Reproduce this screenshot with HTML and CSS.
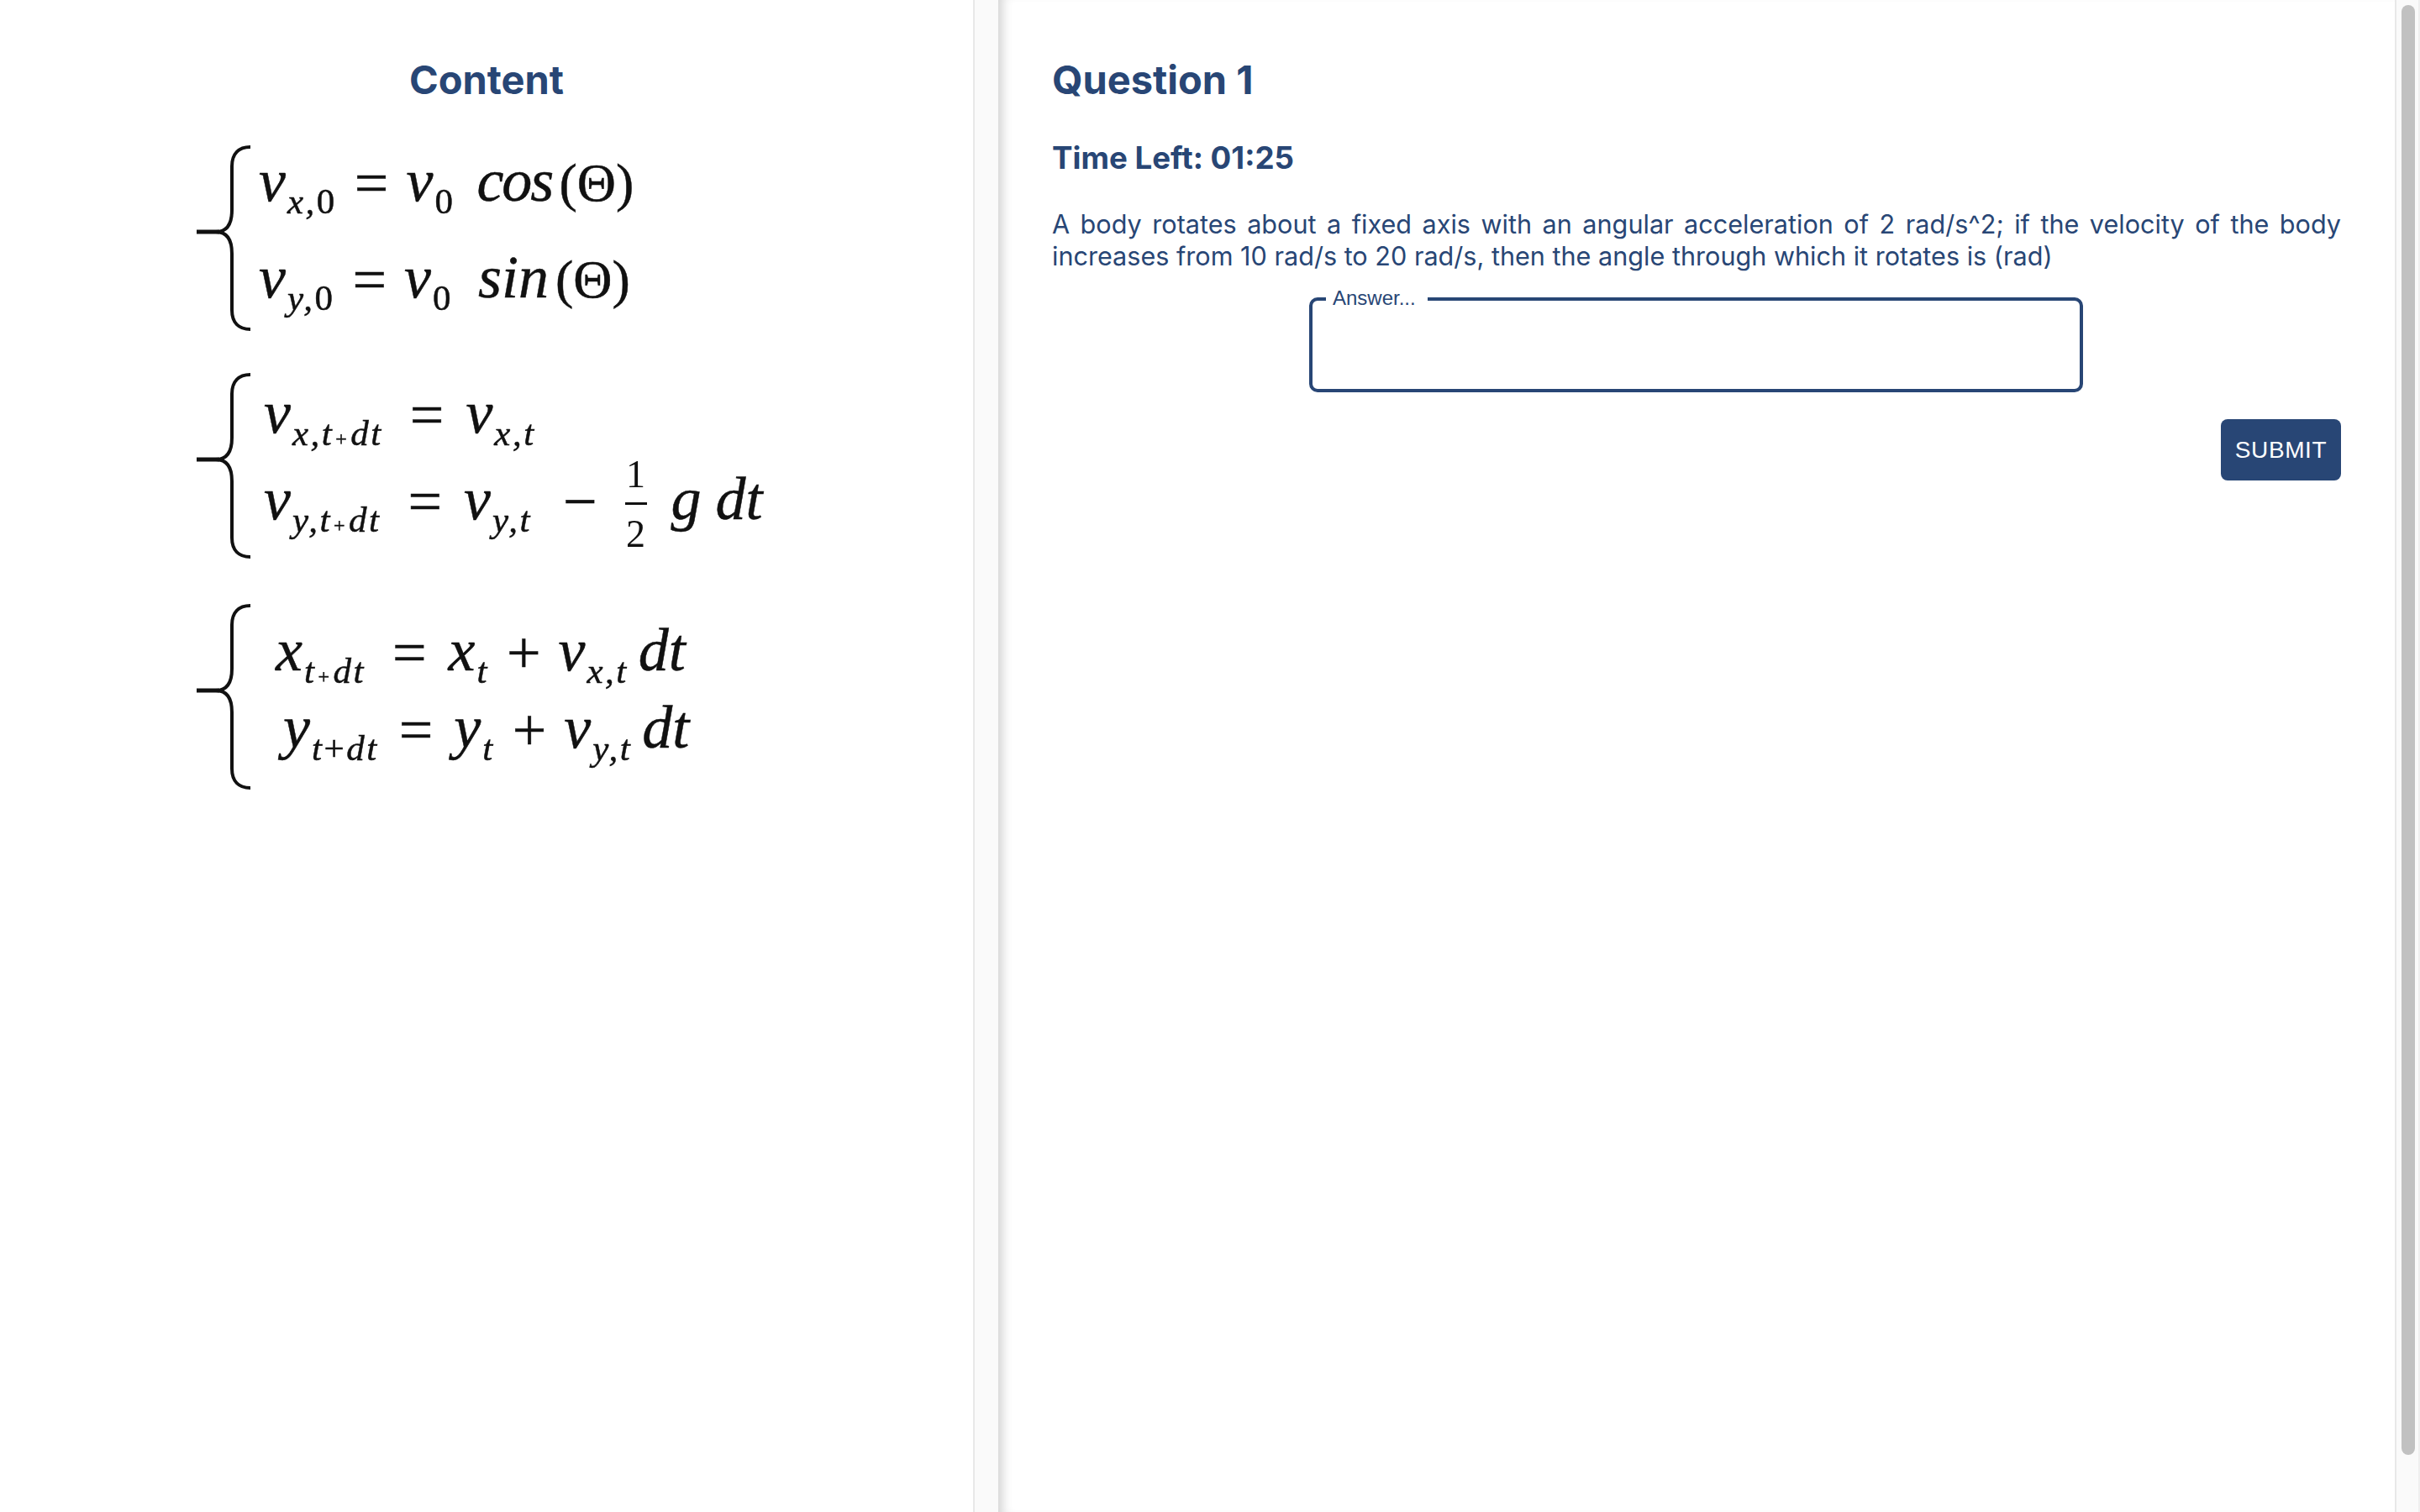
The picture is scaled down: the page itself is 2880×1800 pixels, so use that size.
FILE: index.html
```html
<!DOCTYPE html>
<html lang="en">

<head>
  <meta charset="UTF-8"/>
  <title>Question 1</title>

  <link rel="stylesheet" href="styles.css">
</head>

<body>
<div class="layout">
  <div class="content-pane">
    <h1 class="content-title">Content</h1>

    <div class="system system-first">
      <svg class="brace" viewBox="0 0 67 224"><path d="M65 3C51 3 43 11 43 26V78C43 94 38 104 24 104C38 104 43 114 43 130V197C43 212 51 220 65 220"/><path class="brace-tip" d="M1 104H28"/></svg>
      <div class="lines lines-first">
        <div class="eq"><i>v</i><sub><i>x,</i>0</sub><span class="op">=</span><i>v</i><sub>0</sub><i class="fn fn-cos">cos</i><span class="paren">(&Theta;)</span></div>
        <div class="eq"><i>v</i><sub><i>y,</i>0</sub><span class="op">=</span><i>v</i><sub>0</sub><i class="fn">sin</i><span class="paren">(&Theta;)</span></div>
      </div>
    </div>

    <div class="system">
      <svg class="brace" viewBox="0 0 67 224"><path d="M65 3C51 3 43 11 43 26V78C43 94 38 104 24 104C38 104 43 114 43 130V197C43 212 51 220 65 220"/><path class="brace-tip" d="M1 104H28"/></svg>
      <div class="lines lines-second">
        <div class="eq"><i>v</i><sub><i>x,t</i><small>+</small><i>dt</i></sub><span class="op op-wide">=</span><i>v</i><sub><i>x,t</i></sub></div>
        <div class="eq eq-frac"><i>v</i><sub><i>y,t</i><small>+</small><i>dt</i></sub><span class="op op-wide">=</span><i>v</i><sub><i>y,t</i></sub><span class="op minus">&minus;</span><span class="frac"><span>1</span><span class="frac-bottom">2</span></span><i class="term-g">g</i><i class="term-dt">dt</i></div>
      </div>
    </div>

    <div class="system system-last">
      <svg class="brace" viewBox="0 0 67 224"><path d="M65 3C51 3 43 11 43 26V78C43 94 38 104 24 104C38 104 43 114 43 130V197C43 212 51 220 65 220"/><path class="brace-tip" d="M1 104H28"/></svg>
      <div class="lines lines-third">
        <div class="eq"><i>x</i><sub><i>t</i><small>+</small><i>dt</i></sub><span class="op op-wide">=</span><i>x</i><sub><i>t</i></sub><span class="op plus">+</span><i>v</i><sub><i>x,t</i></sub><i class="dt-end">dt</i></div>
        <div class="eq eq-shift"><i>y</i><sub><i>t</i>+<i>dt</i></sub><span class="op op-tight">=</span><i>y</i><sub><i>t</i></sub><span class="op plus">+</span><i>v</i><sub><i>y,t</i></sub><i class="dt-end">dt</i></div>
      </div>
    </div>
  </div>
  <div class="scroll-track scroll-track-left"></div>

  <div class="question-pane">
    <h1 class="question-title">Question 1</h1>
    <h2 class="time-left">Time Left: 01:25</h2>
    <p class="question-text">A body rotates about a fixed axis with an angular acceleration of 2 rad/s^2; if the velocity of the body increases from 10 rad/s to 20 rad/s, then the angle through which it rotates is (rad)</p>
    <fieldset class="answer">
      <legend>Answer...</legend>
    </fieldset>
    <div class="actions">
      <button class="submit" type="button">SUBMIT</button>
    </div>
  </div>

  <div class="scroll-track">
    <div class="scroll-thumb"></div>
  </div>
</div>
</body>

</html>
```

FILE: styles.css
```css
* {
    box-sizing: border-box;
}

body {
    margin: 0;
    font-family: Inter, sans-serif;
    color: #284675;
    background: #fff;
}

.layout {
    display: flex;
    height: 1800px;
    overflow: hidden;
}

/* left side */
.content-pane {
    width: 1158px;
    flex: none;
    padding-top: 66px;
}

.content-title {
    margin: 0 0 48px;
    font-size: 47px;
    line-height: 58px;
    font-weight: 700;
    text-align: center;
}

.system {
    display: flex;
    height: 224px;
    margin-left: 233px;
    margin-top: 47px;
    color: #111;
    font-family: "Liberation Serif", serif;
    font-size: 72px;
    -webkit-text-stroke: 0.5px #111;
    filter: blur(0.5px);
}

.system-first {
    margin-top: 0;
}

.system-last {
    margin-top: 51px;
}

.brace {
    width: 67px;
    height: 224px;
    flex: none;
}

.brace path {
    fill: none;
    stroke: #111;
    stroke-width: 4;
}

.brace .brace-tip {
    stroke-width: 5;
}

.eq {
    line-height: 76px;
    white-space: nowrap;
}

.lines-first {
    padding-top: 5px;
    padding-left: 8px;
}

.lines-first .eq {
    height: 115px;
}

.lines-second {
    padding-top: 10px;
    padding-left: 14px;
}

.lines-second .eq {
    height: 102px;
}

.lines-second .eq-frac {
    margin-top: -15px;
}

.lines-third {
    padding-top: 18px;
    padding-left: 28px;
}

.lines-third .eq {
    height: 92px;
}

.lines-third .eq-shift {
    padding-left: 9px;
}

.eq sub {
    margin-left: 2px;
    font-size: 43px;
    letter-spacing: 2.5px;
    line-height: 0;
    vertical-align: -15px;
}

.eq small {
    margin: 0 2px;
    font-size: 24px;
}

.op {
    margin: 0 21px 0 21px;
    vertical-align: -3px;
}

.op-wide {
    margin-left: 32px;
    margin-right: 26px;
}

.op-tight {
    margin-left: 24px;
    margin-right: 25px;
}

.fn {
    margin-left: 30px;
}

.fn-cos {
    margin-left: 26px;
    letter-spacing: -2px;
}

.paren {
    margin-left: 8px;
    font-size: 64px;
}

.minus {
    margin: 0 33px 0 37px;
}

.plus {
    margin: 0 21px;
}

.frac {
    display: inline-flex;
    flex-direction: column;
    align-items: center;
    width: 26px;
    vertical-align: 38px;
    font-size: 46px;
    line-height: 50px;
    -webkit-text-stroke: 0;
}

.frac-bottom {
    width: 100%;
    margin-top: 8px;
    padding-top: 10px;
    border-top: 3px solid #111;
    text-align: center;
}

.term-g {
    margin-left: 29px;
}

.term-dt {
    margin-left: 17px;
}

.dt-end {
    margin-left: 12px;
}

.scroll-track {
    width: 30px;
    flex: none;
    background: #fafafa;
    border-left: 2px solid #e8e8e8;
    border-right: 2px solid #efefef;
    padding: 6px 4px 68px 6px;
}

.scroll-track-left {
    border-right: 0;
}

.scroll-thumb {
    height: 100%;
    background: #c1c1c1;
    border-radius: 8px;
}

/* right side */
.question-pane {
    flex: 1;
    padding: 66px 64px 0;
    box-shadow: inset 14px 0 14px -10px rgba(0, 0, 0, 0.2);
}

.question-title {
    margin: 0 0 42px;
    font-size: 47px;
    line-height: 58px;
    font-weight: 700;
}

.time-left {
    margin: 0 0 38px;
    font-size: 36.7px;
    line-height: 44px;
    font-weight: 700;
}

.question-text {
    margin: 0 0 18px;
    font-size: 30.6px;
    line-height: 38px;
    text-align: justify;
}

.answer {
    display: block;
    width: 921px;
    height: 125px;
    min-width: 0;
    margin: 0 0 32px 306px;
    padding: 0;
    border: 4px solid #284675;
    border-radius: 10px;
}

.answer legend {
    margin-left: 16px;
    padding: 0 14px 2px 8px;
    font-family: "Liberation Sans", sans-serif;
    font-size: 24px;
    line-height: 26px;
}

.actions {
    display: flex;
    justify-content: flex-end;
}

.submit {
    width: 143px;
    height: 73px;
    padding: 0;
    border: 0;
    border-radius: 8px;
    background: #284675;
    color: #fff;
    font-family: "Liberation Sans", sans-serif;
    font-size: 28px;
    letter-spacing: 0.6px;
}
```
